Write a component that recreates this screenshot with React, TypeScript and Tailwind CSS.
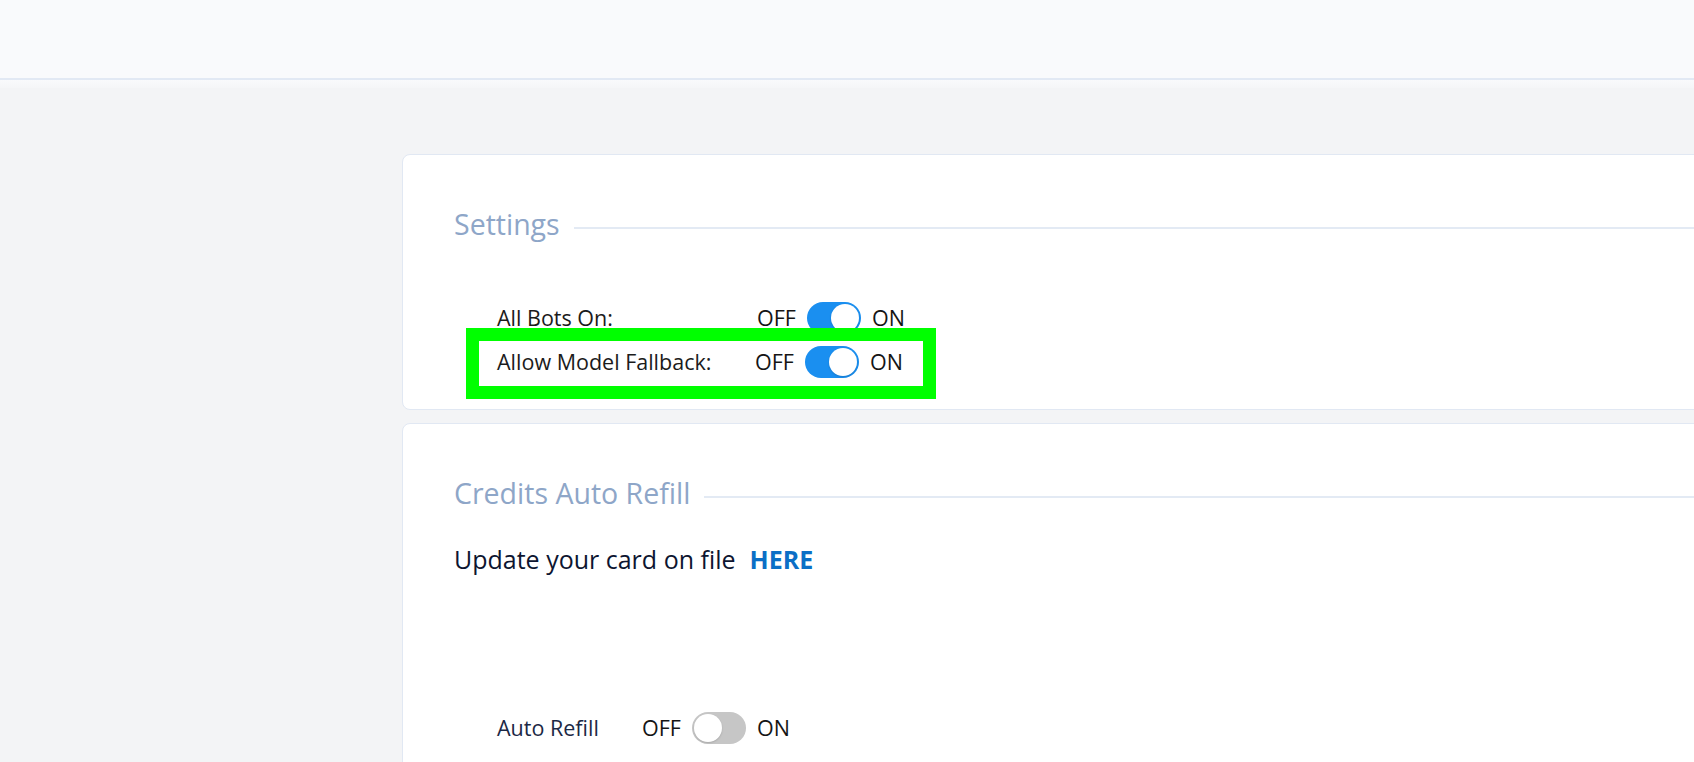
import React from "react";

type ToggleProps = { on: boolean };

function Toggle({ on }: ToggleProps) {
  return (
    <span
      className={
        on
          ? "flex h-[32px] w-[54px] items-center justify-end rounded-full bg-[#1a8ff0] px-[2px]"
          : "flex h-[32px] w-[54px] items-center justify-start rounded-full bg-[#c6c6c6] px-[2px]"
      }
    >
      <span className="h-[28px] w-[28px] rounded-full bg-white shadow-[0_1px_2px_rgba(0,0,0,0.15)]" />
    </span>
  );
}

function SwitchRow({ label, on, labelWidth, labelClass }: { label: string; on: boolean; labelWidth: string; labelClass: string }) {
  return (
    <div className="flex h-[44px] items-center">
      <span className={`${labelWidth} ${labelClass}`}>{label}</span>
      <div className="flex items-center gap-[11px] text-[21.5px] text-[#151515]">
        <span>OFF</span>
        <Toggle on={on} />
        <span>ON</span>
      </div>
    </div>
  );
}

function SectionTitle({ title }: { title: string }) {
  return (
    <div className="flex items-center">
      <h2 className="text-[28.5px] leading-[42px] font-normal text-[#8ea6c8]">{title}</h2>
      <div className="ml-[14px] mt-[8px] h-[2px] flex-1 bg-[#e3eaf4]" />
    </div>
  );
}

export default function App() {
  return (
    <div className="h-screen w-full overflow-hidden bg-[#f3f4f6] font-['Open_Sans','Noto_Sans',sans-serif]">
      {/* top bar */}
      <div className="h-[78px] bg-[#f9fafc]" />
      <div className="h-[2px] bg-[#e2e9f4]" />
      <div className="h-[8px] bg-gradient-to-b from-[#f9fafc] to-[#f5f6f8]" />

      <div className="flex flex-col gap-[13px] pl-[402px] pt-[66px]">
        {/* Settings card */}
        <section className="relative h-[256px] w-[1330px] shrink-0 rounded-[8px] border border-[#e1e8f3] bg-white pl-[51px] pt-[48px]">
          <SectionTitle title="Settings" />
          <div className="mt-[51px] pl-[43px]">
            <SwitchRow label="All Bots On:" on labelWidth="w-[260px]" labelClass="text-[21.5px] text-[#1b1b1b]" />
            <SwitchRow label="Allow Model Fallback:" on labelWidth="w-[258px]" labelClass="text-[21.5px] text-[#1b1b1b]" />
          </div>
          {/* highlight annotation */}
          <div className="pointer-events-none absolute left-[63px] top-[173px] h-[71px] w-[470px] border-[13px] border-[#00ff00]" />
        </section>

        {/* Credits card */}
        <section className="h-[420px] w-[1330px] shrink-0 rounded-[8px] border border-[#e1e8f3] bg-white pl-[51px] pt-[48px]">
          <SectionTitle title="Credits Auto Refill" />
          <p className="mt-[27px] text-[25px] leading-[36px] text-[#0d1530]">
            Update your card on file
            <a href="#" className="ml-[14px] font-bold text-[#0b6fc6]">
              HERE
            </a>
          </p>
          <div className="mt-[129px] pl-[43px]">
            <SwitchRow label="Auto Refill" on={false} labelWidth="w-[145px]" labelClass="text-[21.5px] text-[#1c2845]" />
          </div>
        </section>
      </div>
    </div>
  );
}
